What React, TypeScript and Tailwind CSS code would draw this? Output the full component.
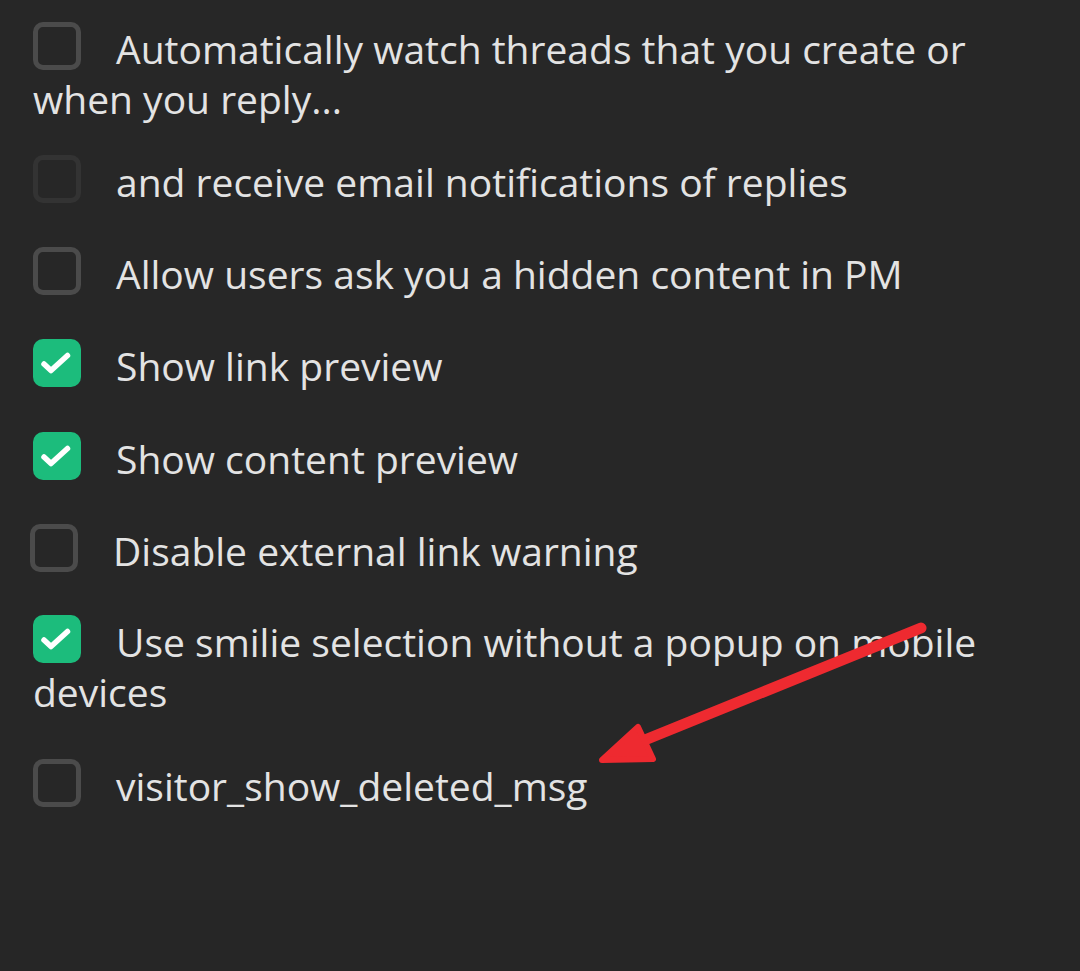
import React from "react";

type Option = {
  label: string;
  checked?: boolean;
  disabled?: boolean;
  shift?: boolean;
  mt: string;
};

const options: Option[] = [
  { label: "Automatically watch threads that you create or when you reply...", mt: "mt-[22px]" },
  { label: "and receive email notifications of replies", disabled: true, mt: "mt-[31px]" },
  { label: "Allow users ask you a hidden content in PM", mt: "mt-[40px]" },
  { label: "Show link preview", checked: true, mt: "mt-[40px]" },
  { label: "Show content preview", checked: true, mt: "mt-[41px]" },
  { label: "Disable external link warning", shift: true, mt: "mt-[40px]" },
  { label: "Use smilie selection without a popup on mobile devices", checked: true, mt: "mt-[39px]" },
  { label: "visitor_show_deleted_msg", mt: "mt-[42px]" },
];

function Box({ checked, disabled }: { checked?: boolean; disabled?: boolean }) {
  if (checked) {
    return (
      <span className="inline-block h-12 w-12 rounded-[10px] bg-[#1cbc7c] align-[-6px]">
        <svg className="block" width="48" height="48" viewBox="0 0 48 48" fill="none">
          <path
            d="M11 25l7 6.5L34.5 16.5"
            stroke="#fff"
            strokeWidth="5.5"
            strokeLinecap="round"
            strokeLinejoin="round"
          />
        </svg>
      </span>
    );
  }
  return (
    <span
      className={
        disabled
          ? "inline-block h-12 w-12 rounded-[10px] border-[5px] border-[#333333] align-[-6px]"
          : "inline-block h-12 w-12 rounded-[10px] border-[5px] border-[#4b4b4b] align-[-6px]"
      }
    />
  );
}

export default function App() {
  return (
    <div
      className="relative flex min-h-screen flex-col bg-[#262626] text-[#e3e3e3]"
      style={{ fontFamily: '"Open Sans", "Noto Sans", sans-serif' }}
    >
      <div className="h-[900px] bg-[#272727] pl-[33px] pr-6">
        {options.map((o) => (
          <div
            key={o.label}
            className={`${o.mt} text-[39px] leading-[50px] ${o.shift ? "-ml-[3px]" : ""}`}
          >
            <Box checked={o.checked} disabled={o.disabled} />
            <span className="ml-[35px]">{o.label}</span>
          </div>
        ))}
      </div>
      <div className="flex-1" />

      <svg
        className="pointer-events-none absolute left-0 top-0"
        width="1080"
        height="971"
        viewBox="0 0 1080 971"
      >
        <path d="M921 628 L630 746" stroke="#ee2a30" strokeWidth="11" strokeLinecap="round" />
        <path
          d="M602 760 L638 727 L653 759 Z"
          fill="#ee2a30"
          stroke="#ee2a30"
          strokeWidth="6"
          strokeLinejoin="round"
        />
      </svg>
    </div>
  );
}
